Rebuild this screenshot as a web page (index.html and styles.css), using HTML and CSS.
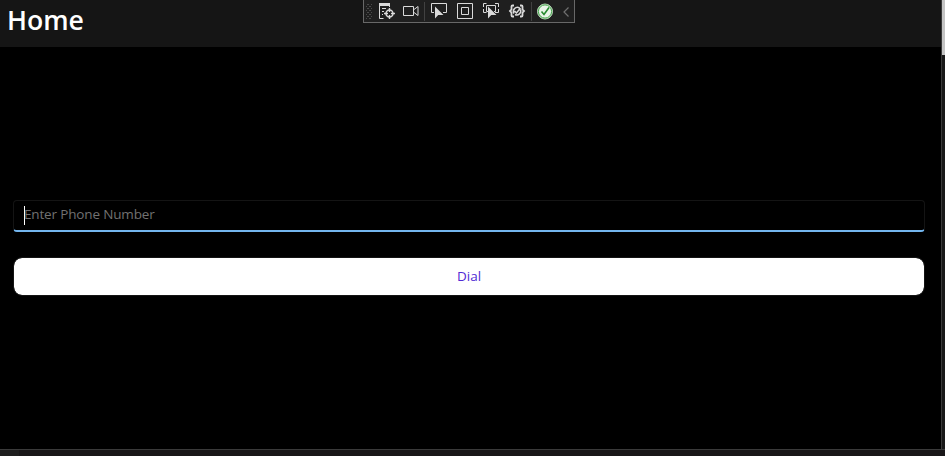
FILE: index.html
```html
<!DOCTYPE html>
<html lang="en">
<head>
<meta charset="utf-8">
<title>Home</title>
<link rel="stylesheet" href="styles.css">
</head>
<body>
<div class="desktop">
  <div class="window">
    <header class="titlebar"><h1>Home</h1></header>
    <main class="content">
      <div class="entry"><span class="caret"></span><span class="placeholder">Enter Phone Number</span></div>
      <button class="dial">Dial</button>
    </main>
  </div>
  <aside class="edge"><div class="edge-light"></div></aside>
  <footer class="bottom"><div class="bottom-corner"></div></footer>
</div>
<div class="toolbar">
  <svg width="212" height="23" viewBox="0 0 212 23" fill="none" stroke="#dadada">
    <defs>
      <pattern id="grip" width="4" height="4" patternUnits="userSpaceOnUse">
        <path d="M0 0h2v1h-2zM2 2h2v1h-2z" fill="#4a4a4a" stroke="none"/>
      </pattern>
    </defs>
    <rect x="3" y="3" width="6" height="17" fill="url(#grip)" stroke="none"/>
    <path d="M16 3h11v3h-11z" fill="#dadada" stroke="none"/>
    <path d="M16.500 4v14.500h4M26.500 4v3M19 8.500h4M19 11.500h2M19 14.500h1"/>
    <circle cx="26.500" cy="13.500" r="3.500" stroke-width="1.500"/>
    <path d="M26.500 8v4M26.500 15v4M21 13.500h4M28 13.500h4" stroke-width="1.400"/>
    <path d="M40.500 6.500h10v9h-10zM51 9.500l4-3v9l-4-3"/>
    <path d="M61.500 2v19M168.500 2v19" stroke="#414141"/>
    <path d="M71 12.500h-2.500v-9h15v9H80"/>
    <path d="M72 6.500v12l3.200-3.500h5.300z" fill="#dadada" stroke="none"/>
    <path d="M94.500 3.500h15v15h-15zM98.500 7.500h7v7h-7z"/>
    <path d="M120.500 7V3.500h3M132 3.500h3.500V7M135.500 9v3.500H132M120.500 9v3.500h3M125 11.500h-1.500v-6h9v6H131"/>
    <path d="M125 6.500v12l3.200-3.500h5.300z" fill="#dadada" stroke="none"/>
    <path d="M151 5.500h-1.500q-1 0-1 1v3l-1.500 1.500 1.500 1.500v3q0 1 1 1h1.500M157 5.500h1.500q1 0 1 1v3l1.500 1.500-1.500 1.500v3q0 1-1 1H157" stroke-width="1.800"/>
    <path d="M156.500 8a4 4 0 0 0-5.500 5.500M152 14.500a4 4 0 0 0 5.500-5M151.500 11l2 2 4-5" stroke-width="1.500"/>
    <circle cx="182" cy="11.500" r="7.500" fill="#e9f4e9" stroke="#b5d5b5"/>
    <circle cx="182" cy="11.500" r="6.600" stroke="#41a348"/>
    <path d="M178.500 11.500l2.500 3 5-7" stroke="#278a30" stroke-width="1.600"/>
    <path d="M205.500 7.500l-4.500 4.500 4.500 4.500" stroke="#707070" stroke-width="1.200"/>
  </svg>
</div>
</body>
</html>
```
FILE: styles.css
```css
body {
  margin: 0;
  background: #000;
  font-family: "Open Sans", "Noto Sans", sans-serif;
  overflow: hidden;
}
.desktop {
  display: grid;
  grid-template-columns: 941px 4px;
  grid-template-rows: 449px 7px;
}
.window {
  background: #000;
}
.titlebar {
  height: 47px;
  background: #151515;
}
h1 {
  margin: 0;
  padding: 1px 0 0 7px;
  font-size: 26.6px;
  line-height: 38px;
  font-weight: 600;
  color: #fff;
}
.content {
  padding: 153px 16px 0 13px;
}
.entry {
  box-sizing: border-box;
  height: 32px;
  display: flex;
  align-items: flex-start;
  padding: 5px 0 0 10px;
  border: 1px solid #141414;
  border-bottom: 2px solid #73b5ee;
  border-radius: 4px;
}
.caret {
  width: 1px;
  height: 19px;
  background: #fff;
}
.placeholder {
  margin-left: -1px;
  font-size: 13.5px;
  line-height: 16px;
  letter-spacing: -0.16px;
  color: #717171;
}
.dial {
  display: block;
  box-sizing: border-box;
  width: 912px;
  height: 39px;
  margin-top: 25px;
  padding: 0 0 2px;
  border: 1px solid #141414;
  border-radius: 9px;
  background: #fff;
  background-clip: padding-box;
  font: 13.5px/18px "Open Sans", "Noto Sans", sans-serif;
  color: #512bd4;
}
.edge {
  border-left: 1px solid #3a3a3a;
  background: #191919;
}
.edge-light {
  height: 55px;
  background: #c4c4c4;
}
.bottom {
  box-sizing: border-box;
  grid-column: 1 / -1;
  border-top: 1px solid #3a3a3a;
  background: #191718;
}
.bottom-corner {
  width: 19px;
  height: 6px;
  background: #1e1e1e;
}
.toolbar {
  position: absolute;
  left: 363px;
  top: 0;
  box-sizing: border-box;
  width: 212px;
  height: 23px;
  background: #1f1f1f;
  border: 1px solid #686868;
  border-top: 0;
}
.toolbar svg {
  display: block;
  margin-left: -1px;
}
```
